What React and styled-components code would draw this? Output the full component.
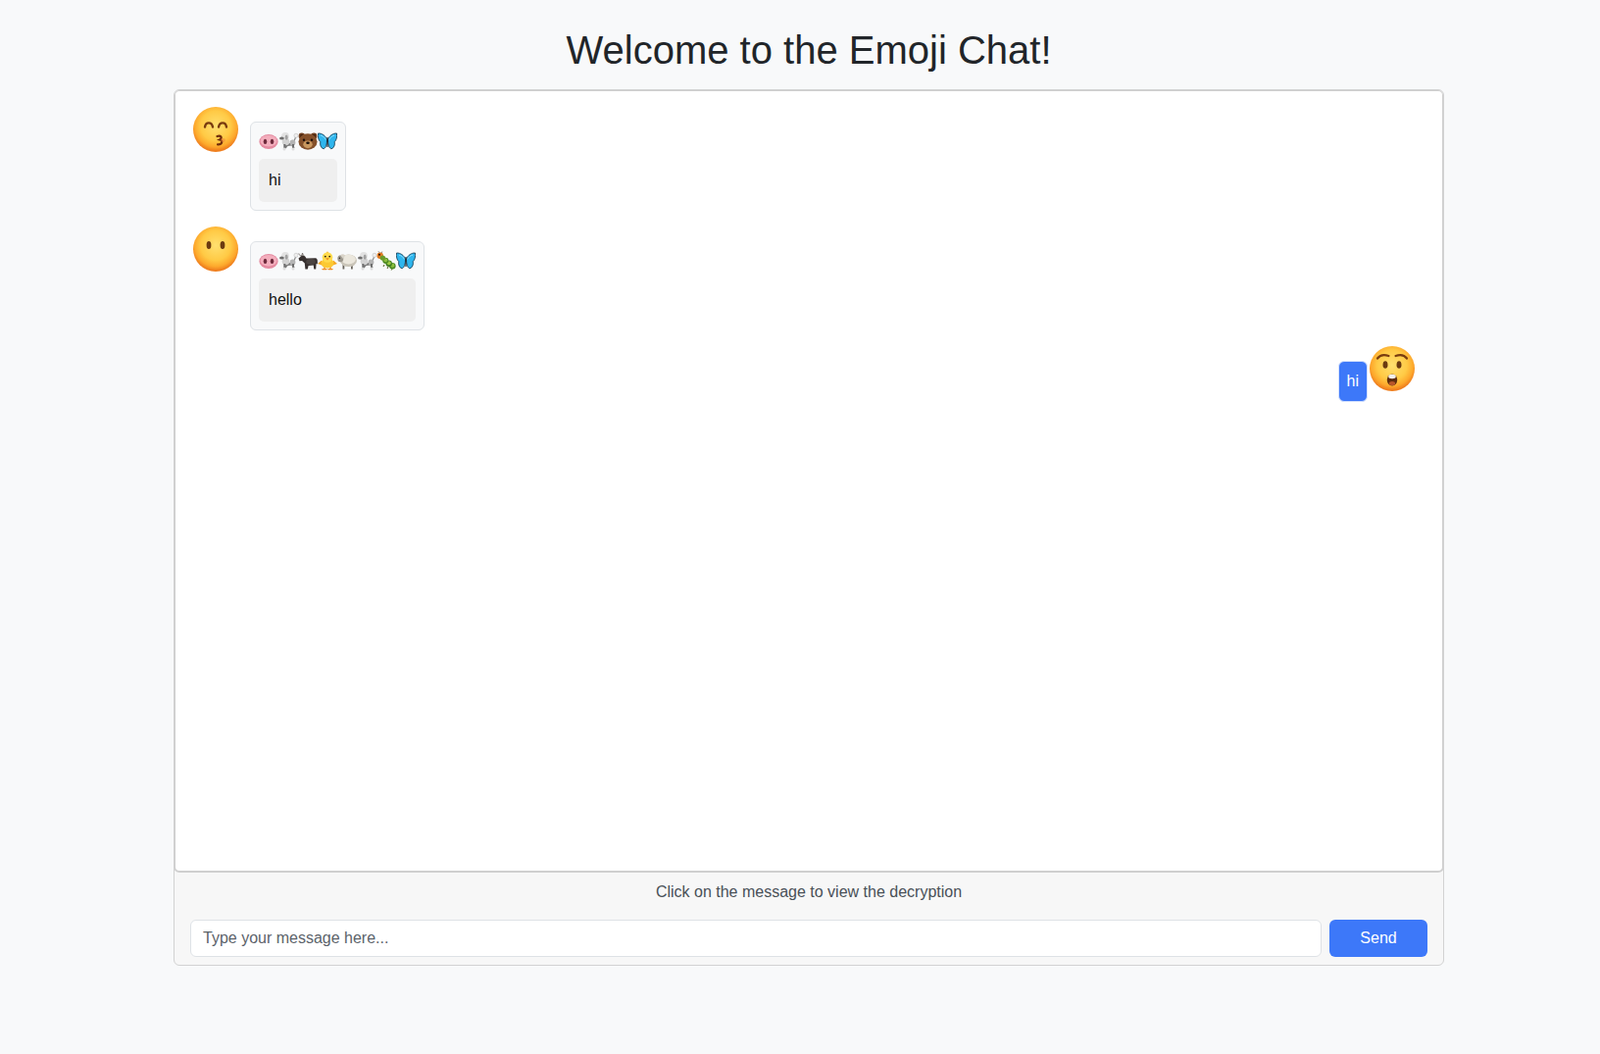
import React from 'react';
import styled, { createGlobalStyle } from 'styled-components';

const GlobalStyle = createGlobalStyle`
  * {
    box-sizing: border-box;
  }
  body {
    margin: 0;
    background-color: #f8f9fa;
    color: #212529;
    font-family: "Liberation Sans", Arial, sans-serif;
    font-size: 16px;
    line-height: 1.5;
  }
`;

const Page = styled.div`
  width: 1296px;
  min-height: 1075px;
  margin-left: 177px;
  padding-top: 27px;
`;

const Title = styled.h1`
  margin: 0 0 16px;
  font-size: 40px;
  font-weight: 400;
  line-height: 48px;
  text-align: center;
`;

const Card = styled.div`
  border: 1px solid #d2d2d2;
  border-radius: 6px;
  background-color: #f7f7f7;
  overflow: hidden;
`;

const ChatBox = styled.div`
  display: flex;
  flex-direction: column;
  gap: 15px;
  height: 799px;
  margin: -1px -1px 0;
  padding: 15px 27px 0 17px;
  background-color: #fff;
  border: 2px solid #cfcfcf;
  border-radius: 6px;
`;

const Row = styled.div`
  display: flex;
  align-items: flex-start;
  justify-content: ${({ $mine }) => ($mine ? 'flex-end' : 'flex-start')};
  gap: ${({ $mine }) => ($mine ? '1px' : '11px')};
`;

const Avatar = styled.svg`
  display: block;
  flex: none;
  width: 48px;
  height: 48px;
`;

const Bubble = styled.div`
  margin-top: 16px;
  padding: 8px;
  background-color: #f8f9fa;
  border: 1px solid #dee2e6;
  border-radius: 6px;
  cursor: pointer;
`;

const EmojiLine = styled.div`
  display: flex;
  height: 22px;
  margin-bottom: 7px;
  align-items: center;
`;

const Animal = styled.svg`
  display: block;
  flex: none;
  width: 20px;
  height: 20px;
`;

const Decrypted = styled.div`
  padding: 10px;
  min-height: 44px;
  background-color: #efefef;
  border-radius: 5px;
  color: #111;
`;

const SentBubble = styled.div`
  margin-top: 16px;
  padding: 8px;
  height: 42px;
  background-color: #3d78f9;
  border: 1px solid #d5e2fd;
  border-radius: 6px;
  color: #fff;
  line-height: 24px;
`;

const Footer = styled.div`
  padding: 8px 16px;
`;

const Hint = styled.div`
  margin-bottom: 16px;
  color: #495057;
  text-align: center;
`;

const InputRow = styled.div`
  display: flex;
  gap: 8px;
`;

const MessageInput = styled.input`
  flex: 1;
  height: 38px;
  padding: 6px 12px;
  background-color: #fff;
  border: 1px solid #dee2e6;
  border-radius: 6px;
  color: #212529;
  font: inherit;

  &::placeholder {
    color: #5c636a;
    opacity: 1;
  }
`;

const SendButton = styled.button`
  width: 100px;
  height: 38px;
  background-color: #3d78f9;
  border: 0;
  border-radius: 6px;
  color: #fff;
  font: inherit;
  cursor: pointer;
`;

const FACE_PARTS = {
  kiss: (
    <>
      <path d="M13 21.500c.8-5.500 7-5.500 8 0M27 21.500c1-5.500 7.200-5.500 8 0" fill="none" stroke="#7a3d0f" strokeWidth="2.400" strokeLinecap="round" />
      <path d="M25.500 31c3.500-1.400 6 1.600 2.500 3.400 4 1 2.400 5.400-2 5" fill="none" stroke="#6e2c0c" strokeWidth="2.200" strokeLinecap="round" />
      <ellipse cx="31.500" cy="35" rx="2.400" ry="2" fill="#f0803a" opacity="0.5" />
    </>
  ),
  blank: (
    <>
      <ellipse cx="17" cy="20" rx="2.400" ry="4" fill="#6b3a10" />
      <ellipse cx="31" cy="20" rx="2.400" ry="4" fill="#6b3a10" />
    </>
  ),
  wow: (
    <>
      <path d="M9 13.500c2.500-3.400 7-4 11.500-2.500M27.500 11c4.500-1.500 9-.900 11.500 2.500" fill="none" stroke="#7a3d0f" strokeWidth="2.200" strokeLinecap="round" />
      <ellipse cx="17" cy="20" rx="2.500" ry="3.800" fill="#6b3a10" />
      <ellipse cx="31" cy="20" rx="2.500" ry="3.800" fill="#6b3a10" />
      <ellipse cx="24" cy="35.500" rx="5.200" ry="6" fill="#5d2c0e" />
      <ellipse cx="24" cy="32" rx="3.800" ry="2.200" fill="#f4f1ea" />
      <ellipse cx="24" cy="39" rx="3.200" ry="2" fill="#b8562a" />
    </>
  ),
};

const Face = ({ kind }) => (
  <Avatar viewBox="0 0 48 48">
    <defs>
      <radialGradient id={`face-${kind}`} cx="50%" cy="42%" r="55%">
        <stop offset="0%" stopColor="#ffe070" />
        <stop offset="60%" stopColor="#ffca45" />
        <stop offset="85%" stopColor="#fda82c" />
        <stop offset="100%" stopColor="#ef7f1e" />
      </radialGradient>
    </defs>
    <circle cx="24" cy="24" r="23" fill={`url(#face-${kind})`} />
    {FACE_PARTS[kind]}
  </Avatar>
);

const ANIMALS = {
  pig: (
    <>
      <ellipse cx="10" cy="10.500" rx="9.600" ry="7.400" fill="#e48aa0" />
      <ellipse cx="10" cy="9.700" rx="8.400" ry="5.800" fill="#f3aebd" />
      <ellipse cx="6.500" cy="10.400" rx="1.800" ry="2.600" fill="#6e2a3c" />
      <ellipse cx="13.500" cy="10.400" rx="1.800" ry="2.600" fill="#6e2a3c" />
    </>
  ),
  poodle: (
    <>
      <path d="M15.500 11L18 5" stroke="#8c8c8c" strokeWidth="1.200" />
      <circle cx="18" cy="4.300" r="2.100" fill="#efefef" stroke="#b4b4b4" strokeWidth=".5" />
      <path d="M6 12h9l1.500 5h-2l-1-2.500-4 .5-1.500 2H6z" fill="#7d7d7d" />
      <circle cx="14.500" cy="11.500" r="2.900" fill="#b4b4b4" />
      <circle cx="7.500" cy="10.500" r="3.800" fill="#d2d2d2" />
      <circle cx="7" cy="4.800" r="3.900" fill="#e2e2e2" />
      <ellipse cx="3.400" cy="7" rx="2.400" ry="1.500" fill="#6e6e6e" />
      <ellipse cx="8.200" cy="6.200" rx="1.500" ry="2.600" fill="#a2a2a2" />
      <rect x="5.300" y="13" width="2" height="5" fill="#6e6e6e" />
      <rect x="14" y="13" width="2" height="5" fill="#6e6e6e" />
      <circle cx="6" cy="18" r="1.500" fill="#dcdcdc" />
      <circle cx="15" cy="18" r="1.500" fill="#dcdcdc" />
    </>
  ),
  bear: (
    <>
      <circle cx="3.800" cy="4.700" r="3.200" fill="#6f3f1f" />
      <circle cx="16.200" cy="4.700" r="3.200" fill="#6f3f1f" />
      <circle cx="3.800" cy="4.700" r="1.600" fill="#3f2110" />
      <circle cx="16.200" cy="4.700" r="1.600" fill="#3f2110" />
      <ellipse cx="10" cy="10.500" rx="9.500" ry="8.300" fill="#84502a" />
      <ellipse cx="10" cy="13.300" rx="4.700" ry="3.900" fill="#c9985f" />
      <circle cx="6" cy="8.700" r="1.200" fill="#1d100a" />
      <circle cx="14" cy="8.700" r="1.200" fill="#1d100a" />
      <ellipse cx="10" cy="11.800" rx="1.800" ry="1.300" fill="#1d100a" />
    </>
  ),
  ox: (
    <>
      <path d="M.8 2.500c.3 1.700 1.300 2.500 3 2.500l.7-3c.4 1.700 1 2.700 2 3.200" fill="none" stroke="#77716d" strokeWidth="1" />
      <path d="M.5 7.500L4 4.500l3 .7 1.500 2.300 9.300-.2c1.300.2 2 1.300 2 2.800v3.400l-1.200-.7-.4 5.700h-1.900l-.6-4-5.100.4-.8 3.600H7.400l-.6-6-2.700-2.600-2.600.4z" fill="#37302f" />
      <ellipse cx="13" cy="11" rx="4.800" ry="3" fill="#4b4442" />
    </>
  ),
  chick: (
    <>
      <path d="M5 18.600h4M11 18.600h4M7 16v2.500M13 16v2.500" stroke="#ef8a1f" strokeWidth="1.400" strokeLinecap="round" />
      <path d="M4 9.500L0 13l4.500 1.500zM16 9.500l4 3.500-4.500 1.500z" fill="#f6a623" />
      <ellipse cx="10" cy="12.500" rx="6.500" ry="5" fill="#fcc933" />
      <circle cx="10" cy="6.500" r="5.300" fill="#ffdb4d" />
      <path d="M8.800 1.700l1.200-1.500 1.200 1.500z" fill="#f9bb30" />
      <circle cx="7.800" cy="5.600" r=".9" fill="#2b1a10" />
      <circle cx="12.200" cy="5.600" r=".9" fill="#2b1a10" />
      <path d="M8.200 7.200h3.600L10 9.500z" fill="#f08a1d" />
    </>
  ),
  sheep: (
    <>
      <rect x="5.500" y="13" width="1.800" height="5.500" fill="#6b665f" />
      <rect x="14" y="13" width="1.800" height="5.500" fill="#6b665f" />
      <ellipse cx="11.500" cy="9.800" rx="8.500" ry="6.300" fill="#c9c4b8" />
      <ellipse cx="11.500" cy="8.600" rx="7.300" ry="4.800" fill="#ebe7dd" />
      <ellipse cx="3.300" cy="7.700" rx="3" ry="3.500" fill="#9d988e" />
      <circle cx="2.400" cy="7.300" r=".7" fill="#2a2522" />
      <path d="M3 4.300c1.700-1.400 3.700-1.300 5 .4L6 8z" fill="#d8d3c8" />
    </>
  ),
  caterpillar: (
    <>
      <path d="M8 14l-1 2M12 16l-1 2M16 18l-.7 1.500" stroke="#4e5a1c" strokeWidth="1" />
      <circle cx="16.300" cy="15.300" r="3.300" fill="#4f8c26" />
      <circle cx="16.300" cy="14.800" r="2" fill="#8dbf3f" />
      <circle cx="12.700" cy="12.700" r="3.200" fill="#3f7a22" />
      <circle cx="12.700" cy="12.200" r="2" fill="#9cc944" />
      <circle cx="9.300" cy="9.800" r="3.100" fill="#4f8c26" />
      <circle cx="9.300" cy="9.300" r="1.900" fill="#8dbf3f" />
      <circle cx="3.700" cy="4.700" r="3.200" fill="#e27a22" />
      <circle cx="6.400" cy="7.100" r="2.700" fill="#6a9a2c" />
      <circle cx="3" cy="3.800" r="1" fill="#1c1208" />
      <path d="M3 1.600L2 .3M5 2L5.800.6" stroke="#3a2812" strokeWidth=".6" />
    </>
  ),
  butterfly: (
    <>
      <path d="M9.500 8C8 4.500 4.500 1.800.5 2 0 5.300.8 9.300 2.800 10.700c-.7 2.800.4 6.400 3.200 7.100 2-.3 3.200-3.700 3.500-7.800z" fill="#2fb6ee" stroke="#11364d" strokeWidth=".8" />
      <path d="M10.500 8c1.500-3.500 5-6.200 9-6 .5 3.300-.3 7.300-2.300 8.700.7 2.800-.4 6.400-3.200 7.100-2-.3-3.200-3.700-3.500-7.800z" fill="#2fb6ee" stroke="#11364d" strokeWidth=".8" />
      <path d="M3 4.200c2.500.3 4.300 2 5.300 4.300M17 4.200c-2.500.3-4.300 2-5.300 4.300" fill="none" stroke="#8fdcf8" strokeWidth="1" />
      <rect x="9.400" y="6" width="1.200" height="10" rx=".6" fill="#16222b" />
    </>
  ),
};

const EmojiAnimal = ({ name }) => <Animal viewBox="0 0 20 20">{ANIMALS[name]}</Animal>;

const messages = [
  { id: 1, face: 'kiss', animals: ['pig', 'poodle', 'bear', 'butterfly'], text: 'hi' },
  { id: 2, face: 'blank', animals: ['pig', 'poodle', 'ox', 'chick', 'sheep', 'poodle', 'caterpillar', 'butterfly'], text: 'hello' },
  { id: 3, face: 'wow', text: 'hi', mine: true },
];

const App = () => {
  return (
    <Page>
      <GlobalStyle />
      <Title>Welcome to the Emoji Chat!</Title>
      <Card>
        <ChatBox>
          {messages.map((m) =>
            m.mine ? (
              <Row key={m.id} $mine>
                <SentBubble>{m.text}</SentBubble>
                <Face kind={m.face} />
              </Row>
            ) : (
              <Row key={m.id}>
                <Face kind={m.face} />
                <Bubble>
                  <EmojiLine>
                    {m.animals.map((a, i) => (
                      <EmojiAnimal key={i} name={a} />
                    ))}
                  </EmojiLine>
                  <Decrypted>{m.text}</Decrypted>
                </Bubble>
              </Row>
            )
          )}
        </ChatBox>
        <Footer>
          <Hint>Click on the message to view the decryption</Hint>
          <InputRow>
            <MessageInput placeholder="Type your message here..." />
            <SendButton>Send</SendButton>
          </InputRow>
        </Footer>
      </Card>
    </Page>
  );
};

export default App;
